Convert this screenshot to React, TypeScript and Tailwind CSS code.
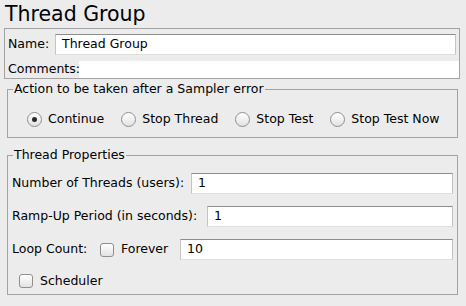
import React from "react";

function Field({ value, className }: { value: string; className: string }) {
  return (
    <div
      className={
        "h-[21px] bg-white border-t border-t-[#8d8d8d] border-x border-x-[#c4c4c4] border-b border-b-[#dedede] flex items-center pl-[6px] text-black " +
        className
      }
    >
      {value}
    </div>
  );
}

function Radio({ checked, label }: { checked?: boolean; label: string }) {
  return (
    <div className="flex items-center gap-[6px] whitespace-nowrap">
      <div className="w-[15px] h-[15px] rounded-full border border-[#8f8f8f] bg-gradient-to-b from-[#ffffff] to-[#e2e2e2] flex items-center justify-center">
        {checked && <div className="w-[5px] h-[5px] rounded-full bg-[#2a2a2a]" />}
      </div>
      <span>{label}</span>
    </div>
  );
}

function Check({ label }: { label: string }) {
  return (
    <div className="flex items-center gap-[7px] whitespace-nowrap">
      <div className="w-[14px] h-[14px] rounded-[3px] border border-[#8f8f8f] bg-gradient-to-b from-[#ffffff] to-[#e2e2e2]" />
      <span>{label}</span>
    </div>
  );
}

export default function App() {
  return (
    <div
      className="w-[466px] h-[306px] bg-[#ececec] text-[12.5px] text-black overflow-hidden"
      style={{ fontFamily: '"DejaVu Sans", sans-serif' }}
    >
      <div className="h-[28px] pl-[5px] pt-[3px] text-[20.5px] leading-[22px]">Thread Group</div>
      <div className="ml-[4px] w-[456px] h-[51px] border border-[#a3a3a3] flex flex-col">
        <div className="flex items-center h-[32px] pt-[4px] pb-[6px] pl-[3px] pr-[3px]">
          <span className="w-[47px] shrink-0 whitespace-nowrap">Name:</span>
          <Field value="Thread Group" className="flex-1" />
        </div>
        <div className="flex items-stretch h-[17px]">
          <span className="pl-[3px] w-[74px] shrink-0 whitespace-nowrap leading-[16px]">Comments:</span>
          <div className="flex-1 bg-white" />
        </div>
      </div>
      <fieldset className="ml-[7px] mt-[2px] w-[451px] h-[57px] border border-[#a3a3a3]">
        <legend className="ml-[5px] px-[1px] leading-[16px]">Action to be taken after a Sampler error</legend>
        <div className="flex items-center gap-[17px] pl-[19px] pt-[13px]">
          <Radio checked label="Continue" />
          <Radio label="Stop Thread" />
          <Radio label="Stop Test" />
          <Radio label="Stop Test Now" />
        </div>
      </fieldset>
      <fieldset className="ml-[7px] mt-[9px] w-[451px] h-[148px] border border-[#a3a3a3]">
        <legend className="ml-[5px] px-[1px] leading-[16px]">Thread Properties</legend>
        <div className="flex flex-col pl-[4px] pr-[4px] pt-[10px] gap-[12px]">
          <div className="flex items-center">
            <span className="w-[179px] shrink-0 whitespace-nowrap">Number of Threads (users):</span>
            <Field value="1" className="flex-1" />
          </div>
          <div className="flex items-center">
            <span className="w-[195px] shrink-0 whitespace-nowrap">Ramp-Up Period (in seconds):</span>
            <Field value="1" className="flex-1" />
          </div>
          <div className="flex items-center">
            <span className="w-[88px] shrink-0 whitespace-nowrap">Loop Count:</span>
            <div className="w-[80px] shrink-0">
              <Check label="Forever" />
            </div>
            <Field value="10" className="flex-1" />
          </div>
          <div className="flex items-center pl-[7px]">
            <Check label="Scheduler" />
          </div>
        </div>
      </fieldset>
    </div>
  );
}
